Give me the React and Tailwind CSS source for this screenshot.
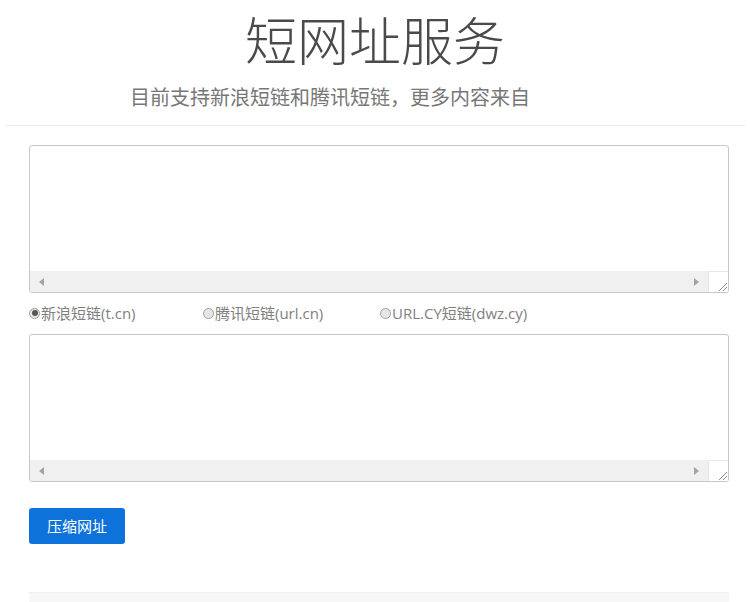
const font = { fontFamily: '"Noto Sans CJK SC", "Open Sans", sans-serif' }
const labelFont = { fontFamily: '"Open Sans", "Noto Sans CJK SC", sans-serif' }

const FakeTextarea = () => (
  <div className="w-[700px] h-[148px] border border-[#c8c8c8] rounded-[3px] bg-white flex flex-col overflow-hidden">
    <div className="flex-1" />
    <div className="h-[21px] flex bg-[#f0f0f0]">
      <div className="flex-1 flex items-center justify-between px-[9px]">
        <svg width="5" height="8" viewBox="0 0 5 8">
          <path d="M5 0 L0 4 L5 8 Z" fill="#a3a3a3" />
        </svg>
        <svg width="5" height="8" viewBox="0 0 5 8">
          <path d="M0 0 L5 4 L0 8 Z" fill="#a3a3a3" />
        </svg>
      </div>
      <div className="w-[20px] bg-white border-l border-t border-[#e6e6e6] flex items-end justify-end">
        <svg width="12" height="12" viewBox="0 0 12 12">
          <path d="M11 3 L3 11 M11 7 L7 11" stroke="#8a8a8a" strokeWidth="1" />
        </svg>
      </div>
    </div>
  </div>
)

const Radio = ({ checked, label, width }) => (
  <label className={`flex items-center text-[15px] text-[#808080] ${width}`} style={labelFont}>
    <span className="w-[11px] h-[11px] rounded-full border border-[#a0a0a0] bg-[#e6e6e6] flex items-center justify-center mr-[1px]">
      {checked && <span className="w-[6px] h-[6px] rounded-full bg-[#555]" />}
    </span>
    {label}
  </label>
)

export default function App() {
  return (
    <div className="w-[750px] h-[602px] bg-white overflow-hidden" style={font}>
      <div className="pt-[7px] text-center">
        <h1 className="text-[52px] leading-[64px] font-light text-[#4a4a4a]">短网址服务</h1>
        <p className="mt-[12px] pr-[90px] text-[20px] leading-[28px] text-[#777]">
          目前支持新浪短链和腾讯短链，更多内容来自
        </p>
      </div>
      <div className="mx-[5px] mt-[14px] border-t border-[#eeeeee]" />

      <div className="pl-[29px] pt-[19px]">
        <FakeTextarea />

        <div className="flex items-center h-[20px] mt-[10px]">
          <Radio checked label="新浪短链(t.cn)" width="w-[174px]" />
          <Radio label="腾讯短链(url.cn)" width="w-[177px]" />
          <Radio label="URL.CY短链(dwz.cy)" width="w-[200px]" />
        </div>

        <div className="mt-[11px]">
          <FakeTextarea />
        </div>

        <button className="mt-[26px] w-[96px] h-[36px] rounded-[3px] bg-[#0d72d9] text-white text-[15px]">
          压缩网址
        </button>

        <div className="mt-[48px] w-[700px] h-[20px] bg-[#f7f7f7] border-t border-[#f0f0f0]" />
      </div>
    </div>
  )
}
